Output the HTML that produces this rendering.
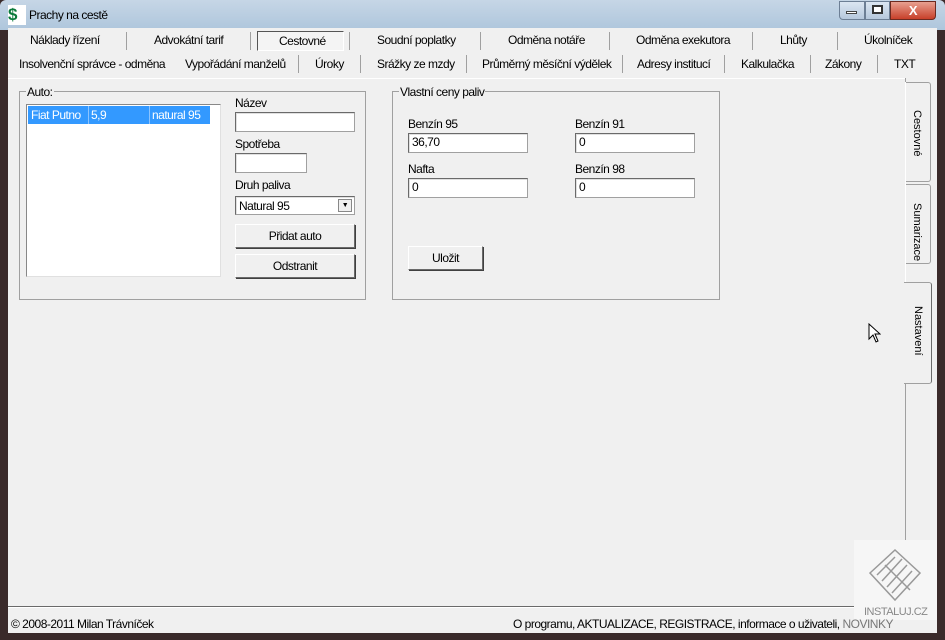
<!DOCTYPE html>
<html><head><meta charset="utf-8"><style>
*{margin:0;padding:0;box-sizing:border-box}
body{width:945px;height:640px;overflow:hidden;background:#3a2a2a;font-family:"Liberation Sans",sans-serif;font-size:12px;color:#000;position:relative;letter-spacing:-0.5px}
.a{position:absolute}
.t{position:absolute;white-space:nowrap;font-size:12px}
.vs{position:absolute;width:1px;background:#a0a0a0}
.inp{position:absolute;background:#fff;border:1px solid #a0a0a0;border-top-color:#6a6a6a;border-left-color:#6a6a6a;box-shadow:inset 1px 1px 0 #e0e0e0;padding:1px 3px;font-size:12px}
.btn{position:absolute;background:#f0f0f0;border:1px solid #fff;border-right-color:#6a6a6a;border-bottom-color:#6a6a6a;box-shadow:1px 1px 0 #404040;text-align:center;font-size:12px}
.grp{position:absolute;border:1px solid #a0a0a0}
.vt{position:absolute;writing-mode:vertical-rl;font-size:11px;letter-spacing:0}
</style></head><body>
<div class="a" style="left:0;top:0;width:945px;height:30px;background:linear-gradient(#c6d6e6,#aec6dc);border-radius:6px 6px 0 0"></div>
<div class="a" style="left:8px;top:5px;width:18px;height:20px;background:#fff;color:#0a7a3a;font-weight:bold;font-size:17px;line-height:20px">$</div>
<div class="t" style="left:29px;top:8px">Prachy na cestě</div>
<div class="a" style="left:839px;top:1px;width:26px;height:19px;background:linear-gradient(#dbe6f2,#b6c8dc);border:1px solid #6d7f95;border-radius:0 0 0 4px"></div>
<div class="a" style="left:846px;top:11px;width:11px;height:3px;background:#fff;border:1px solid #444"></div>
<div class="a" style="left:865px;top:1px;width:25px;height:19px;background:linear-gradient(#dbe6f2,#b6c8dc);border:1px solid #6d7f95"></div>
<div class="a" style="left:872px;top:5px;width:11px;height:9px;border:2px solid #333;background:#fff"></div>
<div class="a" style="left:890px;top:1px;width:46px;height:19px;background:linear-gradient(#e8a090,#c8402a);border:1px solid #6d2a20;border-radius:0 0 4px 0;color:#fff;font-weight:bold;text-align:center;line-height:18px;font-size:13px">X</div>
<div class="a" style="left:8px;top:28px;width:929px;height:605px;background:#f0f0f0"></div>
<div class="vs" style="left:126px;top:32px;height:18px"></div>
<div class="vs" style="left:250px;top:32px;height:18px"></div>
<div class="vs" style="left:349px;top:32px;height:18px"></div>
<div class="vs" style="left:480px;top:32px;height:18px"></div>
<div class="vs" style="left:609px;top:32px;height:18px"></div>
<div class="vs" style="left:752px;top:32px;height:18px"></div>
<div class="vs" style="left:837px;top:32px;height:18px"></div>
<div class="a" style="left:257px;top:31px;width:87px;height:20px;border:1px solid #555;border-right-color:#fff;border-bottom-color:#fff;background:#f4f4f4"></div>
<div class="t" style="left:30px;top:33px">Náklady řízení</div>
<div class="t" style="left:154px;top:33px">Advokátní tarif</div>
<div class="t" style="left:279px;top:34px">Cestovné</div>
<div class="t" style="left:377px;top:33px">Soudní poplatky</div>
<div class="t" style="left:508px;top:33px">Odměna notáře</div>
<div class="t" style="left:636px;top:33px">Odměna exekutora</div>
<div class="t" style="left:780px;top:33px">Lhůty</div>
<div class="t" style="left:864px;top:33px">Úkolníček</div>
<div class="vs" style="left:298px;top:55px;height:18px"></div>
<div class="vs" style="left:360px;top:55px;height:18px"></div>
<div class="vs" style="left:466px;top:55px;height:18px"></div>
<div class="vs" style="left:622px;top:55px;height:18px"></div>
<div class="vs" style="left:724px;top:55px;height:18px"></div>
<div class="vs" style="left:810px;top:55px;height:18px"></div>
<div class="vs" style="left:877px;top:55px;height:18px"></div>
<div class="t" style="left:19px;top:57px">Insolvenční správce - odměna</div>
<div class="t" style="left:185px;top:57px">Vypořádání manželů</div>
<div class="t" style="left:315px;top:57px">Úroky</div>
<div class="t" style="left:377px;top:57px">Srážky ze mzdy</div>
<div class="t" style="left:482px;top:57px">Průměrný měsíční výdělek</div>
<div class="t" style="left:637px;top:57px">Adresy institucí</div>
<div class="t" style="left:741px;top:57px">Kalkulačka</div>
<div class="t" style="left:825px;top:57px">Zákony</div>
<div class="t" style="left:894px;top:57px">TXT</div>
<div class="a" style="left:8px;top:78px;width:897px;height:1px;background:#fff"></div>
<div class="a" style="left:905px;top:78px;width:1px;height:4px;background:#a0a0a0"></div>
<div class="grp" style="left:19px;top:91px;width:347px;height:209px"></div>
<div class="t" style="left:26px;top:85px;background:#f0f0f0;padding:0 1px">Auto:</div>
<div class="a" style="left:26px;top:104px;width:195px;height:173px;background:#fff;border:1px solid #888;border-right-color:#e0e0e0;border-bottom-color:#e0e0e0"></div>
<div class="a" style="left:28px;top:106px;width:182px;height:18px;background:#3399ff"></div>
<div class="t" style="left:31px;top:108px;color:#fff">Fiat Putno</div>
<div class="a" style="left:88px;top:106px;width:1px;height:18px;background:#8cc4ff"></div>
<div class="t" style="left:91px;top:108px;color:#fff">5,9</div>
<div class="a" style="left:149px;top:106px;width:1px;height:18px;background:#8cc4ff"></div>
<div class="t" style="left:152px;top:108px;color:#fff">natural 95</div>
<div class="t" style="left:235px;top:96px">Název</div>
<div class="inp" style="left:235px;top:112px;width:120px;height:20px"></div>
<div class="t" style="left:235px;top:137px">Spotřeba</div>
<div class="inp" style="left:235px;top:153px;width:72px;height:20px"></div>
<div class="t" style="left:235px;top:178px">Druh paliva</div>
<div class="inp" style="left:235px;top:196px;width:120px;height:19px;padding-top:2px">Natural 95</div>
<div class="a" style="left:338px;top:199px;width:14px;height:13px;background:#f0f0f0;border:1px solid #888;font-size:7px;text-align:center;line-height:12px">▼</div>
<div class="btn" style="left:235px;top:224px;width:120px;height:24px;line-height:22px">Přidat auto</div>
<div class="btn" style="left:235px;top:254px;width:120px;height:24px;line-height:22px">Odstranit</div>
<div class="grp" style="left:392px;top:91px;width:328px;height:209px"></div>
<div class="t" style="left:399px;top:85px;background:#f0f0f0;padding:0 1px">Vlastní ceny paliv</div>
<div class="t" style="left:408px;top:117px">Benzín 95</div>
<div class="inp" style="left:408px;top:133px;width:120px;height:20px">36,70</div>
<div class="t" style="left:575px;top:117px">Benzín 91</div>
<div class="inp" style="left:575px;top:133px;width:120px;height:20px">0</div>
<div class="t" style="left:408px;top:162px">Nafta</div>
<div class="inp" style="left:408px;top:178px;width:120px;height:20px">0</div>
<div class="t" style="left:575px;top:162px">Benzín 98</div>
<div class="inp" style="left:575px;top:178px;width:120px;height:20px">0</div>
<div class="btn" style="left:408px;top:246px;width:75px;height:24px;line-height:22px">Uložit</div>
<div class="a" style="left:905px;top:82px;width:26px;height:100px;border:1px solid #a0a0a0;border-left:none;border-radius:0 3px 3px 0;background:#f0f0f0"></div>
<div class="vt" style="left:911px;top:110px">Cestovné</div>
<div class="a" style="left:905px;top:184px;width:26px;height:80px;border:1px solid #a0a0a0;border-left:none;border-radius:0 3px 3px 0;background:#f0f0f0"></div>
<div class="vt" style="left:911px;top:203px">Sumarizace</div>
<div class="a" style="left:904px;top:282px;width:28px;height:102px;border:1px solid #a0a0a0;border-left:none;border-right-color:#6a6a6a;border-radius:0 3px 3px 0;background:#f0f0f0"></div>
<div class="vt" style="left:912px;top:306px">Nastavení</div>
<div class="a" style="left:905px;top:82px;width:1px;height:200px;background:#fff"></div>
<div class="a" style="left:905px;top:384px;width:1px;height:222px;background:#a0a0a0"></div>
<div class="a" style="left:8px;top:606px;width:898px;height:1px;background:#6a6a6a"></div>
<div class="a" style="left:8px;top:607px;width:898px;height:1px;background:#fff"></div>
<div class="a" style="left:854px;top:540px;width:83px;height:80px;background:#f6f6f6"></div>
<svg class="a" style="left:865px;top:545px" width="60" height="60"><g fill="none" stroke="#999" stroke-width="1.5"><path d="M5 28 L30 5 L55 28 L30 55 Z"/><path d="M12 30 L30 12 M17 36 L37 14 M22 42 L42 20 M27 48 L47 26 M20 20 L45 45"/></g></svg>
<div class="t" style="left:864px;top:606px;color:#888;font-size:11px">INSTALUJ.CZ</div>
<div class="t" style="left:11px;top:617px">© 2008-2011 Milan Trávníček</div>
<div class="t" style="left:513px;top:617px">O programu, AKTUALIZACE, REGISTRACE, informace o uživateli, <span style="color:#777">NOVINKY</span></div>
<svg class="a" style="left:868px;top:323px" width="13" height="20"><path d="M1 1 L1 16 L5 12 L8 19 L10 18 L7 11 L12 11 Z" fill="#fff" stroke="#000"/></svg>
</body></html>
